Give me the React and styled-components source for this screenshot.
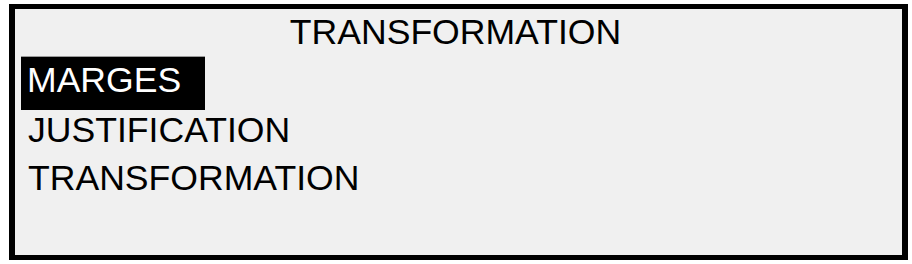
import styled, { createGlobalStyle } from "styled-components";

const GlobalStyle = createGlobalStyle`
  html, body {
    margin: 0;
    padding: 0;
    background: #fff;
  }
`;

const Page = styled.div`
  padding: 4px 0 0 9px;
`;

const Screen = styled.div`
  box-sizing: border-box;
  width: 899px;
  height: 256px;
  border: 6px solid #000;
  border-top-width: 5px;
  border-bottom-width: 5px;
  background: #f0f0f0;
  font-family: "Liberation Sans", Arial, sans-serif;
  font-size: 35.6px;
  color: #000;
  display: flex;
  flex-direction: column;
`;

const Title = styled.div`
  text-align: center;
  line-height: 46px;
  padding-right: 6px;
`;

const Menu = styled.ul`
  list-style: none;
  margin: 0;
  padding: 1px 0 0;
  display: flex;
  flex-direction: column;
  align-items: flex-start;
`;

const Item = styled.li`
  line-height: ${(p) => (p.$selected ? "46px" : "48px")};
  padding: ${(p) => (p.$selected ? "0 24px 7px 6px" : "0 0 0 13px")};
  margin: ${(p) => (p.$selected ? "0 0 -4px 6px" : "0")};
  background: ${(p) => (p.$selected ? "#000" : "transparent")};
  color: ${(p) => (p.$selected ? "#fff" : "#000")};
  border-top: ${(p) => (p.$selected ? "1px solid #9a9a9a" : "none")};
`;

const items = ["MARGES", "JUSTIFICATION", "TRANSFORMATION"];

export default function App() {
  return (
    <>
      <GlobalStyle />
      <Page>
        <Screen>
          <Title>TRANSFORMATION</Title>
          <Menu>
            {items.map((label, i) => (
              <Item key={label} $selected={i === 0}>
                {label}
              </Item>
            ))}
          </Menu>
        </Screen>
      </Page>
    </>
  );
}
